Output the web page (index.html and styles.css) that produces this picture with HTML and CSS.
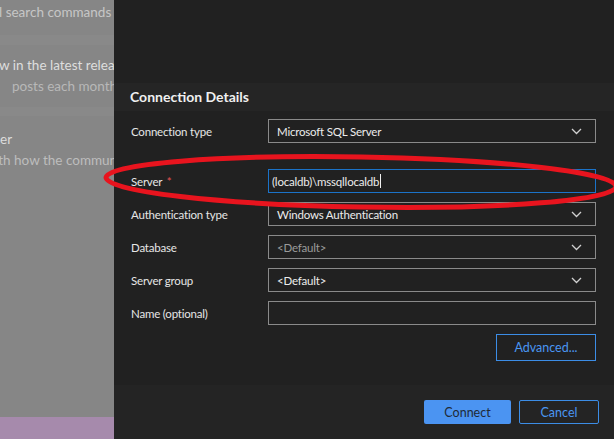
FILE: index.html
```html
<!DOCTYPE html>
<html>
<head>
<meta charset="utf-8">
<link rel="stylesheet" href="styles.css">
</head>
<body>
<div class="page">
  <div class="backdrop">
    <div class="bg-line l1">l search commands to quickly</div>
    <div class="bg-band b1"></div>
    <div class="bg-line l2">w in the latest release</div>
    <div class="bg-line l3">posts each month summarizing</div>
    <div class="bg-band b2"></div>
    <div class="bg-line l4">er</div>
    <div class="bg-line l5">ith how the community uses</div>
    <div class="bg-fill"></div>
    <div class="status"></div>
  </div>
  <div class="dialog">
    <div class="dialog-top"></div>
    <div class="dialog-header">Connection Details</div>
    <div class="dialog-body">
      <div class="row">
        <div class="label">Connection type</div>
        <div class="field select"><span>Microsoft SQL Server</span><svg class="chev" width="11" height="7" viewBox="0 0 11 7"><polyline points="1,1 5.5,5.5 10,1" fill="none" stroke="#d0d0d0" stroke-width="1.3"/></svg></div>
      </div>
      <div class="row row-server">
        <div class="label">Server <span class="req">*</span></div>
        <div class="field focused"><span>(localdb)\mssqllocaldb</span><span class="caret"></span></div>
      </div>
      <div class="row">
        <div class="label">Authentication type</div>
        <div class="field select"><span>Windows Authentication</span><svg class="chev" width="11" height="7" viewBox="0 0 11 7"><polyline points="1,1 5.5,5.5 10,1" fill="none" stroke="#d0d0d0" stroke-width="1.3"/></svg></div>
      </div>
      <div class="row">
        <div class="label">Database</div>
        <div class="field select"><span class="placeholder">&lt;Default&gt;</span><svg class="chev" width="11" height="7" viewBox="0 0 11 7"><polyline points="1,1 5.5,5.5 10,1" fill="none" stroke="#d0d0d0" stroke-width="1.3"/></svg></div>
      </div>
      <div class="row">
        <div class="label">Server group</div>
        <div class="field select"><span>&lt;Default&gt;</span><svg class="chev" width="11" height="7" viewBox="0 0 11 7"><polyline points="1,1 5.5,5.5 10,1" fill="none" stroke="#d0d0d0" stroke-width="1.3"/></svg></div>
      </div>
      <div class="row">
        <div class="label">Name (optional)</div>
        <div class="field"></div>
      </div>
      <div class="adv-row">
        <button class="btn-outline adv">Advanced...</button>
      </div>
    </div>
    <div class="dialog-footer">
      <button class="btn-primary">Connect</button>
      <button class="btn-outline cancel">Cancel</button>
    </div>
  </div>
  <svg class="annot" width="614" height="439" viewBox="0 0 614 439">
    <ellipse cx="361" cy="182" rx="255" ry="25" fill="none" stroke="#e8141e" stroke-width="5" transform="rotate(1 361 182)"/>
  </svg>
</div>
</body>
</html>
```
FILE: styles.css
```css
* { box-sizing: border-box; }
html, body { margin: 0; padding: 0; }
body {
  width: 614px;
  height: 439px;
  overflow: hidden;
  font-family: Lato, "Noto Sans", sans-serif;
  font-size: 12px;
  background: #212121;
}
.page {
  position: relative;
  display: flex;
  width: 614px;
  height: 439px;
}
.backdrop {
  width: 114px;
  flex: none;
  display: flex;
  flex-direction: column;
  background: #868686;
  overflow: hidden;
  font-size: 13.5px;
  white-space: nowrap;
}
.bg-line {
  height: 21px;
  line-height: 21px;
  color: #c9c9c9;
}
.l1 { margin-top: 2px; text-indent: -1px; color: #c6c6c6; }
.b1 { height: 10px; margin-top: 12px; background: #898989; }
.l2 { margin-top: 10px; text-indent: -1px; color: #dedede; }
.l3 { text-indent: 12px; color: #b8b8b8; }
.b2 { height: 9px; margin-top: 10px; background: #898989; }
.l4 { margin-top: 13px; color: #dcdcdc; }
.l5 { text-indent: -5px; color: #bdbdbd; }
.bg-fill { flex: 1; }
.status { height: 22px; background: #a68aac; }

.dialog {
  flex: 1;
  display: flex;
  flex-direction: column;
  background: #212121;
  color: #e6e6e6;
}
.dialog-top { height: 83px; }
.dialog-header {
  height: 28px;
  background: #252525;
  padding-left: 16px;
  font-size: 14px;
  font-weight: 700;
  line-height: 28px;
  color: #f0f0f0;
}
.dialog-body {
  flex: 1;
  display: flex;
  flex-direction: column;
  gap: 9px;
  padding: 8px 18px 0 17px;
  font-size: 11.5px;
  letter-spacing: -0.2px;
}
.row {
  display: flex;
  align-items: center;
  height: 24px;
}
.row-server { margin-top: 17px; }
.label {
  width: 137px;
  flex: none;
  color: #e6e6e6;
}
.req { color: #e05252; margin-left: 2px; }
.field {
  flex: 1;
  height: 24px;
  border: 1px solid #8a8a8a;
  display: flex;
  align-items: center;
  padding: 0 8px;
  color: #ececec;
}
.field.select { justify-content: space-between; padding-right: 13px; }
.field.focused { border-color: #1b73c9; padding-left: 3px; }
.caret {
  width: 1px;
  height: 14px;
  background: #f0f0f0;
  margin-left: 1px;
}
.placeholder { color: #9b9b9b; }
.chev { flex: none; margin-top: 1px; }
.adv-row {
  display: flex;
  justify-content: flex-end;
}
button {
  font-family: inherit;
  font-size: 12.5px;
  letter-spacing: 0;
  cursor: pointer;
}
.btn-outline {
  background: transparent;
  border: 1px solid #3c8de6;
  color: #4a96f2;
}
.adv { width: 100px; height: 27px; }
.dialog-footer {
  height: 54px;
  background: #242424;
  display: flex;
  justify-content: flex-end;
  align-items: flex-start;
  gap: 8px;
  padding: 15px 15px 0 0;
}
.btn-primary {
  width: 87px;
  height: 24px;
  background: #4b94f2;
  border: none;
  border-radius: 2px;
  color: #1f2a36;
}
.cancel { width: 80px; height: 24px; border-radius: 2px; }
.annot {
  position: absolute;
  left: 0;
  top: 0;
  pointer-events: none;
}
```
